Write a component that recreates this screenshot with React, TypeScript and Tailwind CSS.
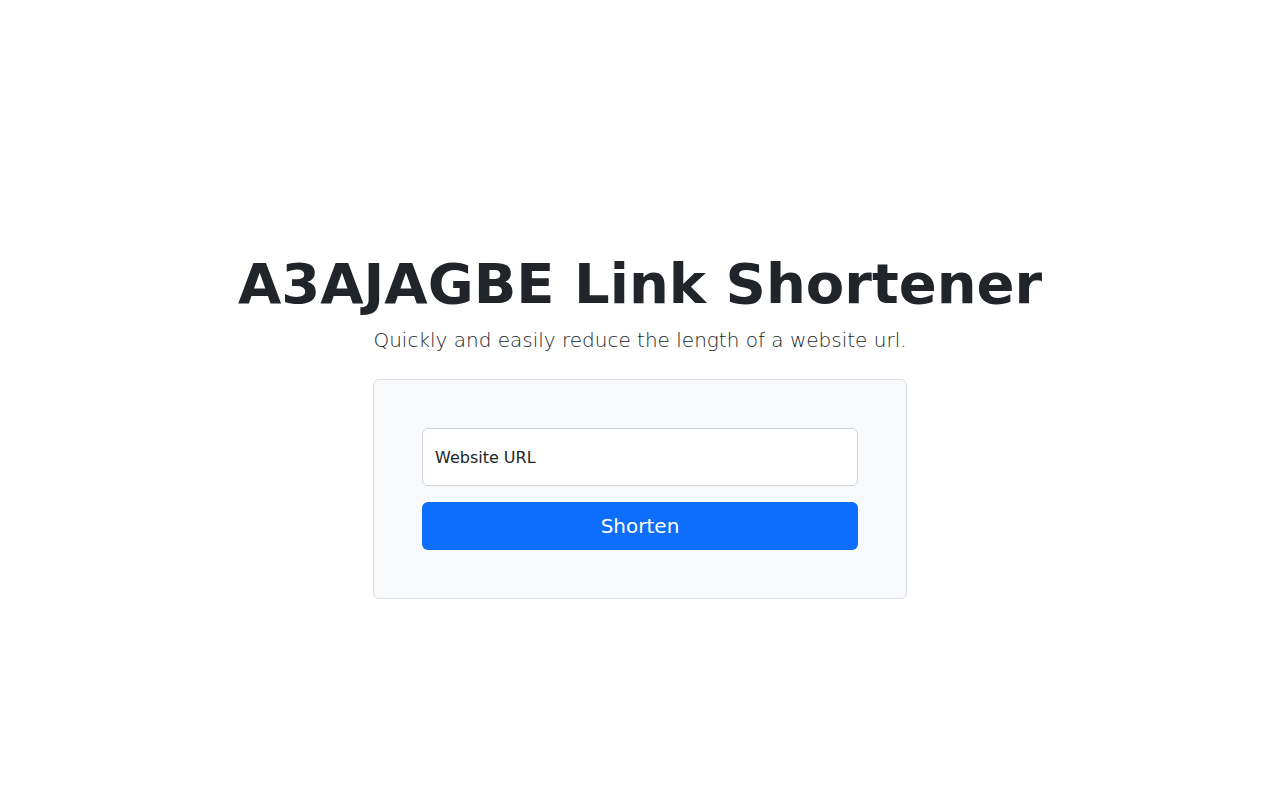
export default function App() {
  return (
    <main className="min-h-screen bg-white flex flex-col items-center pt-[250px] font-['DejaVu_Sans',sans-serif] text-[#212529]">
      <h1 className="text-[56px] leading-[1.2] font-bold mb-2 text-center">A3AJAGBE Link Shortener</h1>
      <p className="text-[20px] leading-[1.5] font-light text-center mb-6">
        Quickly and easily reduce the length of a website url.
      </p>
      <form className="w-[534px] p-12 bg-[#f8f9fa] border border-[#dee2e6] rounded-md flex flex-col gap-4">
        <input
          className="h-[58px] w-full bg-white border border-[#ced4da] rounded-md px-3 text-base text-[#212529] placeholder:text-[#212529] outline-none"
          placeholder="Website URL"
        />
        <button
          type="button"
          className="h-12 w-full rounded-md bg-[#0d6efd] text-white text-[20px]"
        >
          Shorten
        </button>
      </form>
    </main>
  );
}
